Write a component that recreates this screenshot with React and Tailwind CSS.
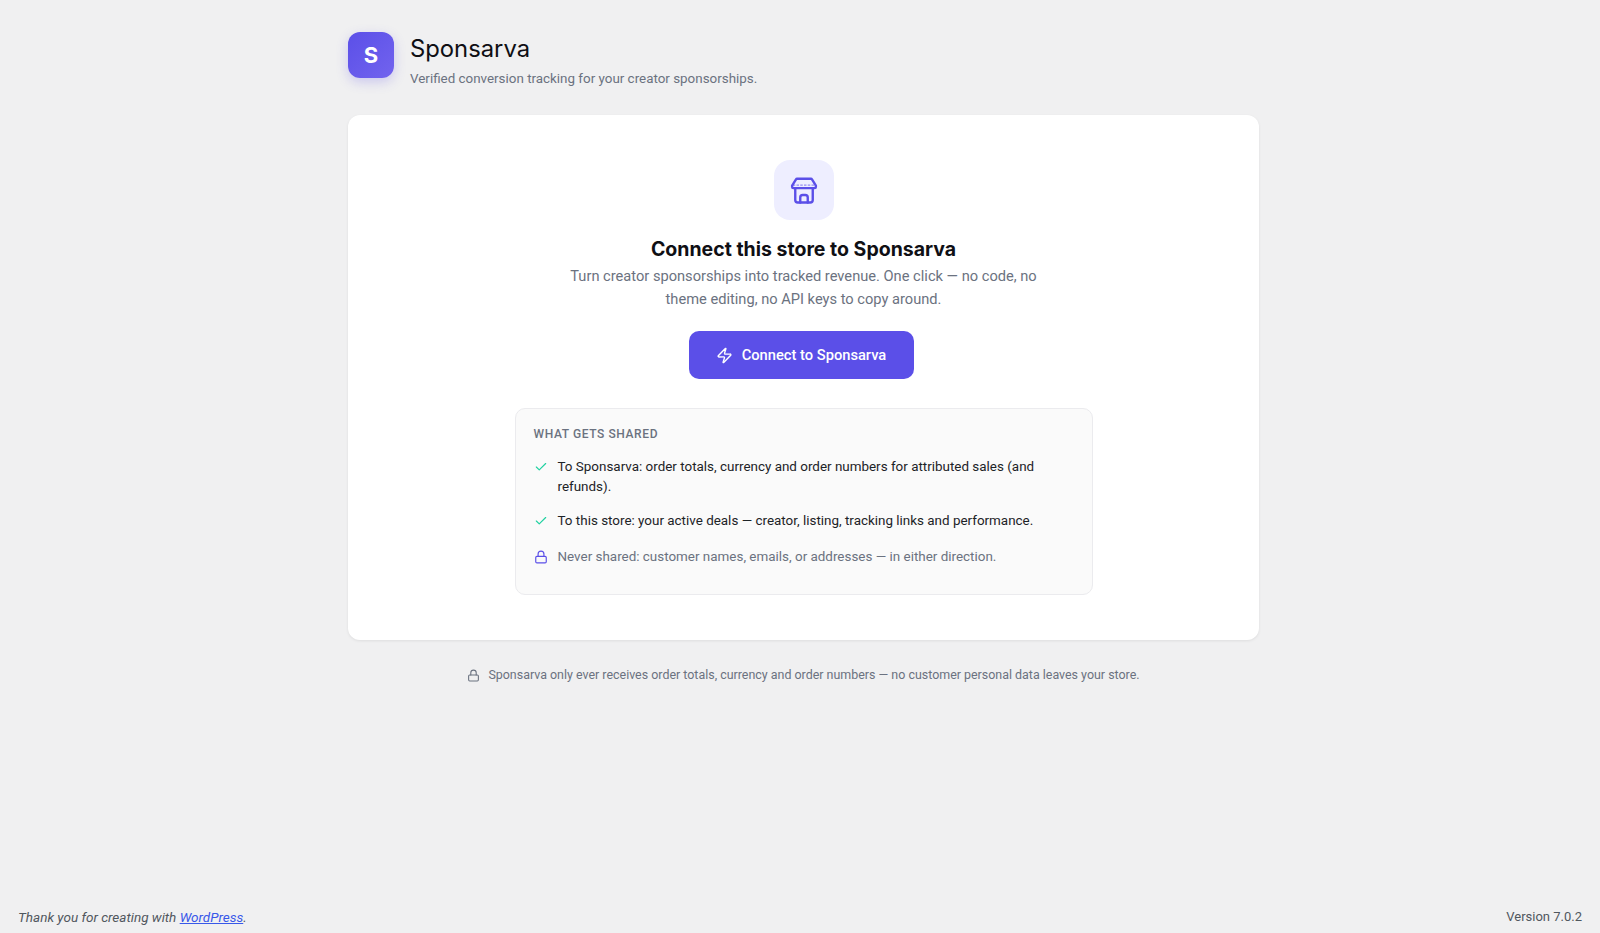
import { Zap, Check, Lock } from 'lucide-react'

const body = "font-['Roboto','Noto_Sans',sans-serif]"

// drawn by hand, lucide's Store has a different awning
function StoreIcon() {
    return (
        <svg width="30" height="30" viewBox="0 0 24 24" fill="none" stroke="#5b4fe8" strokeWidth="1.9" strokeLinecap="round" strokeLinejoin="round">
            <path d="M6.5 3h11a1 1 0 0 1 .9.5L21.5 8.5v1a1 1 0 0 1-1 1h-17a1 1 0 0 1-1-1v-1L5.6 3.5a1 1 0 0 1 .9-.5z" />
            <path d="M5 10.5V20a2 2 0 0 0 2 2h10a2 2 0 0 0 2-2V10.5" />
            <path d="M9 22v-4a2 2 0 0 1 2-2h2a2 2 0 0 1 2 2v4" />
            <path d="M3 8h18" strokeWidth="1" strokeDasharray="2 1" strokeLinecap="butt" opacity="0.6" />
        </svg>
    )
}

export default function App() {
    return (
        <div className={`min-h-screen bg-[#f0f0f1] flex flex-col text-[#6b7280] ${body}`}>
            <main className="flex-1 w-[911px] ml-[348px] pt-[32px]">
                <header className="flex items-start gap-[17px]">
                    <div className="w-[46px] h-[46px] rounded-xl bg-gradient-to-br from-[#5b4fe8] to-[#7263ee] shadow-[0_4px_12px_rgba(91,79,232,0.25)] flex items-center justify-center text-white text-[22px] font-bold font-['Inter',sans-serif]">
                        S
                    </div>
                    <div className="mt-[2px] -ml-[1px]">
                        <h1 className="text-[23.8px] leading-[30px] text-[#0f0f14] font-['Inter',sans-serif] font-normal">Sponsarva</h1>
                        <p className="text-[13.4px] leading-5 mt-[5px]">Verified conversion tracking for your creator sponsorships.</p>
                    </div>
                </header>

                <section className="mt-[26px] bg-white rounded-xl shadow-[0_1px_3px_rgba(0,0,0,0.08)] pt-[45px] pb-[45px] flex flex-col items-center">
                    <div className="w-[60px] h-[60px] rounded-2xl bg-[#eeeeff] flex items-center justify-center">
                        <StoreIcon />
                    </div>
                    <h2 className="mt-[15px] text-[19.5px] leading-7 font-bold text-[#0f0f14] font-['Inter',sans-serif]">Connect this store to Sponsarva</h2>
                    <p className="w-[480px] text-center text-[14.65px] leading-[23px] mt-[2px]">
                        Turn creator sponsorships into tracked revenue. One click — no code, no theme editing, no API keys to copy around.
                    </p>
                    <button className="mt-[20px] mr-[5px] w-[225px] h-[48px] pt-px rounded-[10px] bg-[#5b4fe8] text-white text-[14.7px] font-medium flex items-center justify-center gap-[9px]">
                        <Zap size={17} strokeWidth={2} />
                        Connect to Sponsarva
                    </button>
                    <div className="mt-[29px] w-[578px] rounded-[10px] border border-[#ebebee] bg-[#fafafa] px-[18px] pt-[17px] pb-[27px]">
                        <div className="text-[12px] leading-4 font-medium tracking-[0.05em] uppercase">What gets shared</div>
                        <ul className="mt-[15px] text-[13.43px] leading-5">
                            <li className="flex gap-[10px] text-[#1d2327]">
                                <Check size={14} className="text-[#1fd1a0] mt-[3px] shrink-0" />
                                <span>To Sponsarva: order totals, currency and order numbers for attributed sales (and refunds).</span>
                            </li>
                            <li className="flex gap-[10px] text-[#1d2327] mt-[14px]">
                                <Check size={14} className="text-[#1fd1a0] mt-[3px] shrink-0" />
                                <span>To this store: your active deals — creator, listing, tracking links and performance.</span>
                            </li>
                            <li className="flex gap-[10px] mt-[16px]">
                                <Lock size={14} className="text-[#5b4fe8] mt-[3px] shrink-0" />
                                <span>Never shared: customer names, emails, or addresses — in either direction.</span>
                            </li>
                        </ul>
                    </div>
                </section>

                <p className="mt-[25px] flex items-center justify-center gap-2 text-[12.45px] leading-5">
                    <Lock size={13} />
                    Sponsarva only ever receives order totals, currency and order numbers — no customer personal data leaves your store.
                </p>
            </main>

            <footer className="flex justify-between px-[18px] pb-[6px] text-[13px] leading-5 text-[#50575e]">
                <span className="italic text-[13.5px]">Thank you for creating with <a href="#" className="text-[#3858e9] underline">WordPress</a>.</span>
                <span>Version 7.0.2</span>
            </footer>
        </div>
    )
}
